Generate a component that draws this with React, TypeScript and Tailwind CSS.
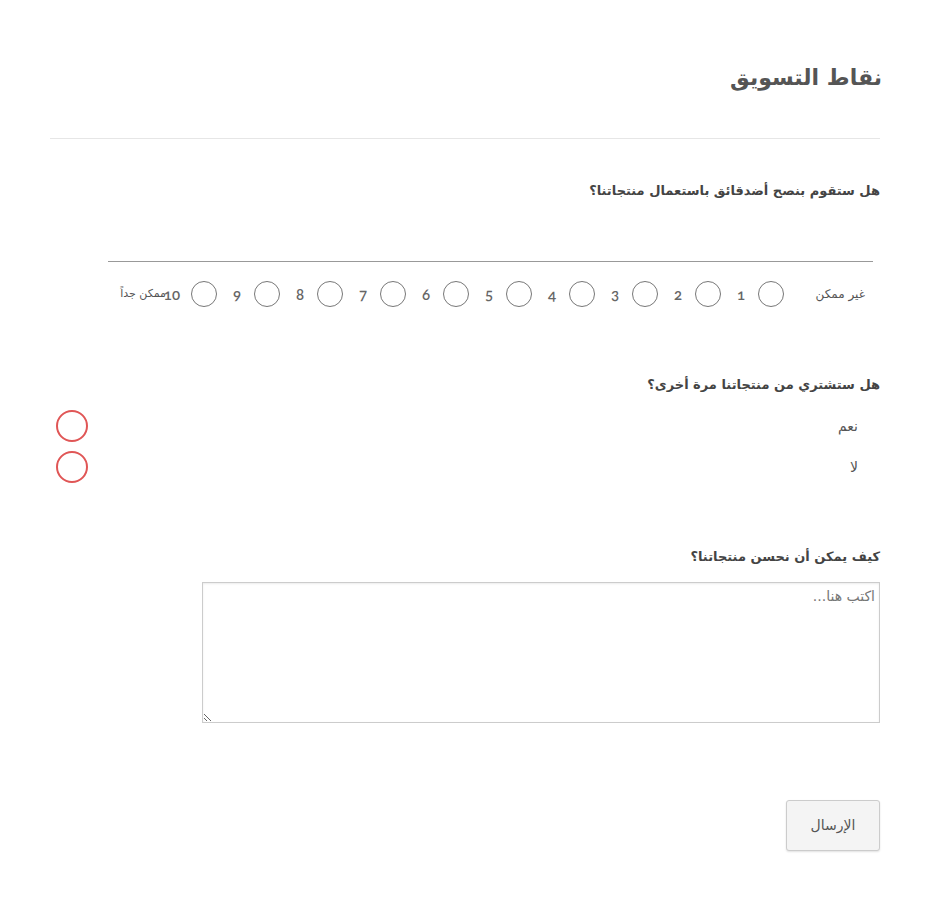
import { useState } from 'react';

const SCALE = [1, 2, 3, 4, 5, 6, 7, 8, 9, 10];

export default function App() {
  const [score, setScore] = useState<number | null>(null);
  const [buyAgain, setBuyAgain] = useState<string | null>(null);
  const [note, setNote] = useState('');

  return (
    <div
      dir="rtl"
      className="min-h-screen bg-white text-[#555] px-[50px] pt-[56px] font-['DejaVu_Sans',sans-serif]"
    >
      {/* Header */}
      <h1 className="text-[22px] font-bold leading-[44px] -ml-[2px] -mr-[2px]">نقاط التسويق</h1>
      <div className="mt-[38px] border-t border-[#e6e6e6]" />

      {/* Question 1 */}
      <div className="mt-[42px]">
        <h3 className="text-[13px] font-bold leading-[20px] text-[#444]">هل ستقوم بنصح أضدقائق باستعمال منتجاتنا؟</h3>
        <div className="mt-[60px] mr-[7px] ml-[58px] border-t border-[#999]" />
        <div className="mt-[19px] flex items-center pr-[15px] text-[12px] leading-[26px]">
          <span className="w-[50px] text-[#555]">غير ممكن</span>
          <div className="mr-[31px] flex items-center">
            {SCALE.map((n) => (
              <label key={n} className="flex items-center cursor-pointer">
                <span
                  onClick={() => setScore(n)}
                  className={`w-[26px] h-[26px] rounded-full border ${score === n ? 'border-[#555] bg-[#eee]' : 'border-[#777]'}`}
                />
                <span className="w-[12px] mr-[11px] ml-[14px] text-center text-[15px] font-semibold text-[#666] font-['Lato',sans-serif] oldstyle-nums">
                  {n}
                </span>
              </label>
            ))}
          </div>
          <span className="mr-[-12px] text-[11px] text-[#555]">ممكن جداً</span>
        </div>
      </div>

      {/* Question 2 */}
      <div className="mt-[68px]">
        <h3 className="text-[13px] font-bold leading-[20px] text-[#444]">هل ستشتري من منتجاتنا مرة أخرى؟</h3>
        <div className="mt-[15px] flex flex-col gap-[9px]">
          {['نعم', 'لا'].map((opt) => (
            <div key={opt} className="flex items-center justify-between pr-[22px] pl-[6px] h-[32px]">
              <span className="text-[14px]">{opt}</span>
              <span
                onClick={() => setBuyAgain(opt)}
                className={`w-[32px] h-[32px] rounded-full border-2 border-[#e05656] cursor-pointer ${buyAgain === opt ? 'bg-[#fbe3e3]' : ''}`}
              />
            </div>
          ))}
        </div>
      </div>

      {/* Question 3 */}
      <div className="mt-[64px]">
        <h3 className="text-[13px] font-bold leading-[20px] text-[#444]">كيف يمكن أن نحسن منتجاتنا؟</h3>
        <textarea
          value={note}
          onChange={(e) => setNote(e.target.value)}
          placeholder="اكتب هنا..."
          className="mt-[15px] block w-[678px] h-[141px] border border-[#ccc] shadow-[inset_0_1px_2px_rgba(0,0,0,0.08)] px-[4px] py-[3px] text-[14px] text-[#555] placeholder:text-[#777] outline-none"
        />
      </div>

      <div className="mt-[77px] flex">
        <button className="w-[94px] h-[51px] rounded-[3px] border border-[#ccc] bg-[#f4f4f4] text-[14px] text-[#555] shadow-[0_1px_2px_rgba(0,0,0,0.12)]">
          الإرسال
        </button>
      </div>
    </div>
  );
}
